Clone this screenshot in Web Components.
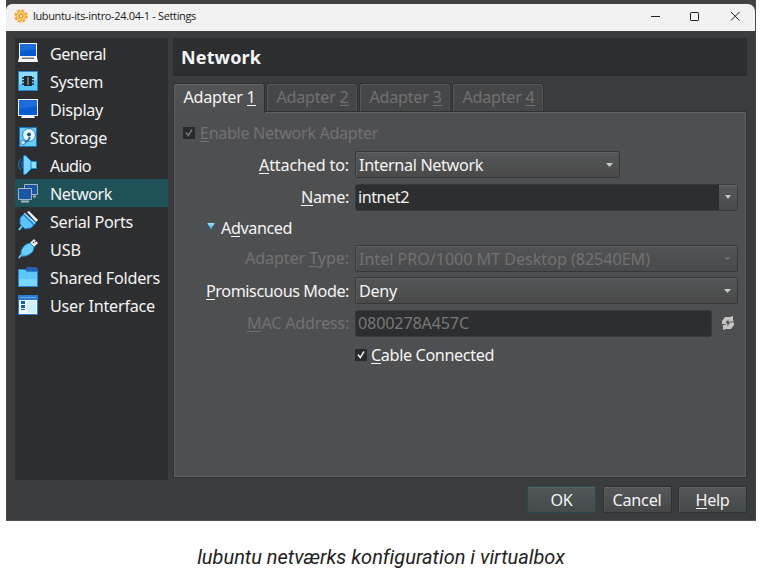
<!DOCTYPE html>
<html lang="da"><head><meta charset="utf-8"><title>Settings</title>
<style>
body{margin:0;background:#fff;width:762px;height:570px;overflow:hidden;font-family:"Noto Sans",sans-serif;font-size:16.2px;color:#f4f4f4}
</style></head><body>
<settings-page></settings-page>
<script>
const define=(name,css,html,init)=>customElements.define(name,class extends HTMLElement{
  constructor(){super();this.attachShadow({mode:'open'}).innerHTML='<style>*{box-sizing:border-box}'+css+'</style>'+html;}
  connectedCallback(){if(init)init(this,this.shadowRoot);}
});
/* Text run spaced to an exact width; "_" before a letter marks its mnemonic. */
define('fit-text',':host{display:inline-block;white-space:pre;line-height:20px;flex:none}u{text-decoration:none;background:linear-gradient(currentColor,currentColor) 0 19px/100% 1px no-repeat}','<span></span>',(h,r)=>{
  const s=r.querySelector('span'),t=h.getAttribute('text')||'',w=+h.getAttribute('w');
  s.innerHTML=t.replace(/_(.)/g,'<u>$1</u>');
  const n=s.textContent.length;
  if(n)s.style.letterSpacing=((w-s.getBoundingClientRect().width)/n)+'px';
});
const icons={
General:'<path d="M1 0h18v14H1z" fill="#f2f2f2"/><path d="M2 1h16v12H2z" fill="#075bd0"/><path d="M2 1h16v5L2 8z" fill="#1c6cdb"/><path d="M1 14h18l1 5H0z" fill="#f6f6f6"/><path d="M4 14.500h12v1.500H4z" fill="#777"/>',
System:'<path d="M.500.500h19v19H.500z" fill="#5cc4f6" stroke="#2a86ca"/><path d="M1 1h18v8L1 13z" fill="#8bdcff"/><path d="M6 5h8v10H6z" fill="#20282e"/><path d="M4 7h2m-2 3h2m-2 3h2m8-6h2m-2 3h2m-2 3h2" stroke="#20282e" stroke-width="1.600"/><path d="M9 6h2v8H9z" fill="#66737a"/>',
Display:'<path d="M0 0h20v17H0z" fill="#f2f2f2"/><path d="M1 1h18v15H1z" fill="#075bd0"/><path d="M1 1h18v6L1 10z" fill="#1c6cdb"/><path d="M4 17h12l1 2H3z" fill="#f6f6f6"/>',
Storage:'<path d="M1.500.500h17v19h-17z" fill="#6bcdfa" stroke="#1b75ba"/><circle cx="11" cy="8" r="6.400" fill="#e9faff" stroke="#2383c9"/><circle cx="11" cy="7.500" r="1.900" fill="#174e86"/><path d="M5 16q5-1 7-6" fill="none" stroke="#2a6fae" stroke-width="2"/><circle cx="5" cy="15.500" r="2.300" fill="#b9ecff" stroke="#2a6fae" stroke-width=".8"/>',
Audio:'<path d="M3 4Q-2 10 3 15M5 6Q2 10 5 13" fill="none" stroke="#27689b" stroke-width="1.300"/><path d="M5.500 1l2-.5 6 6v7l-6 6-2-.5z" fill="#78d6ff" stroke="#198be0"/><path d="M13 6.500h5.500v7H13z" fill="#8be2ff" stroke="#168bd8"/>',
Network:'<path d="M6.500 1.500h13v10h-13z" fill="#1856a4" stroke="#a3b2be"/><path d="M15 13.500h3" stroke="#a3b2be" stroke-width="2"/><path d="M.500 5.500h13v11H.500z" fill="#1957a4" stroke="#a8b4bf"/><path d="M3 18.500h8" stroke="#a8b4bf" stroke-width="2"/>',
'Serial Ports':'<path d="M9 1l2-1 9 9-2 2z" fill="#f4f4f4"/><path d="M2 7l5-5 11 10-5 5-6 1-5-5z" fill="#5cc4fb" stroke="#1676c8"/><path d="M5 3l11 11" stroke="#1d7cc9" stroke-width="1.300"/><path d="M6 2l11 10" stroke="#bdeaff"/><path d="M4 15l-3 4" stroke="#65cfff" stroke-width="2"/>',
USB:'<path d="M12 4l4-4 4 4-4 4z" fill="#f2f2f2"/><path d="M15 3l1 1m1-2l1 1" stroke="#444" stroke-width="1.300"/><path d="M6 7q2-2 6-3l4 4q0 5-4 7-4 3-9 2-1-6 3-10z" fill="#6bcfff" stroke="#2382c8"/><path d="M3 16l-2 3" stroke="#73d5ff" stroke-width="1.600"/>',
'Shared Folders':'<path d="M7 3l2-3h9l2 2v5H7z" fill="#2461b5"/><path d="M0 2h7l2 2h11v16H0z" fill="#2e83d3"/><path d="M1 3h6l2 2h10v14H1z" fill="#5cc8fb"/><path d="M1 12h18v7H1z" fill="#79d8ff"/>',
'User Interface':'<path d="M0 0h20v20H0z" fill="#2c7bd2"/><path d="M1 5h18v14H1z" fill="#f3fbff"/><path d="M9 6h9v12H9z" fill="#cdf0fc"/><path d="M3 6h4v3H3zm0 4h4v3H3zm0 4h4v1H3z" fill="#165caf"/><path d="M2 2.500h16" stroke="#5da9ec"/>'};
define('nav-item',':host{display:flex;height:28px;align-items:center;padding-left:3px;gap:12px}:host([selected]){background:#1e5158}svg{width:20px;height:20px;flex:none}fit-text{padding-top:2px}','<svg viewBox="0 0 20 20"></svg>',(h,r)=>{
 const f=document.createElement('fit-text');f.setAttribute('text',h.getAttribute('text'));f.setAttribute('w',h.getAttribute('w'));r.append(f);
 r.querySelector('svg').innerHTML=icons[h.getAttribute('text')];
});
define('title-bar',':host{display:flex;height:27px;background:#f2f2f2;border-radius:6px 7px 0 0;align-items:center;padding:0 12px 2px 8px;color:#1b1b1b;font:11px "Open Sans",sans-serif}fit-text{margin-left:5px;margin-right:auto}.g{width:14px;height:14px}.c{width:94px;height:16px}','<svg class="g" viewBox="0 0 16 16"><circle cx="8" cy="8" r="5.500" fill="#ffc65a" stroke="#f2a63a"/><circle cx="8" cy="8" r="6.700" fill="none" stroke="#f0a336" stroke-width="2" stroke-dasharray="3.200 2.060"/><circle cx="8" cy="8" r="2.100" fill="#f6f1e9" stroke="#d87915"/></svg><fit-text text="lubuntu-its-intro-24.04-1 - Settings" w="163"></fit-text><svg class="c" viewBox="0 0 94 16" fill="none" stroke="#222"><path d="M2 8.500h9"/><rect x="41.500" y="4.500" width="8" height="8" rx=".7"/><path d="M82 4l8.500 8.500m0-8.500L82 12.500"/></svg>');
define('tab-label',':host{display:flex;justify-content:center;align-items:center;width:92px;height:28px;padding:0 0 1px 1px;background:#454648;border:1px solid #323335;border-bottom:0;box-shadow:inset 1px 1px #57585a,inset -1px 0 #505153;border-radius:3px 3px 0 0;color:#717173}:host([active]){height:30px;padding-bottom:3px;color:#f4f4f4;background:linear-gradient(#535456,#4e4f51);border-color:#303133;z-index:1;margin-bottom:-2px;box-shadow:inset 1px 1px #626365}','<slot></slot>');
define('check-box',':host{display:block;width:12px;height:12px;background:#292a2c;color:#eee;flex:none}svg{display:block}','<svg width="12" height="12" viewBox="0 0 12 12" fill="none" stroke="currentColor" stroke-width="1.500"><path d="M3 5.500l2.300 3.200L9 2.500"/></svg>');
define('drop-down',':host{display:flex;align-items:center;height:27px;padding:1px 6px 0 3px;border:1px solid #363739;border-radius:2px;background:linear-gradient(#555658,#484948);box-shadow:inset 0 1px #616264,inset 1px 0 #5b5c5e}:host([disabled]){color:#717173;background:linear-gradient(#525355,#494a4b)}i{margin-left:auto;width:7px;height:4px;background:#c9c9ca;clip-path:polygon(0 0,100% 0,50% 100%)}:host([disabled]) i{background:#6b6c6e}','<slot></slot><i></i>');
define('text-field',':host{display:flex;align-items:center;height:27px;padding-left:2px;background:#2d2e30;border:1px solid #393a3c;border-radius:3px}b{margin-left:auto;width:18px;height:25px;display:grid;place-items:center;background:linear-gradient(#57585a,#494a4b);box-shadow:inset 0 1px #69696c}i{width:6px;height:4px;background:#c9c9ca;clip-path:polygon(0 0,100% 0,50% 100%)}:host(:not([menu])) b{display:none}:host([disabled]){color:#777779}','<slot></slot><b><i></i></b>');
define('push-button',':host{display:flex;width:69px;height:27px;align-items:center;justify-content:center;background:linear-gradient(#565759,#464748);border:1px solid #2f3032;border-radius:2px;box-shadow:inset 0 1px #626365,inset 1px 0 #58595b}:host([primary]){border-color:#254b50;background:linear-gradient(#505759,#434b4b);box-shadow:inset 0 1px #5a6365}','<slot></slot>');
define('network-panel',`:host{display:block;height:367px;border:1px solid #303133;background:#4e4f51;box-shadow:inset 1px 1px #606163,inset -1px -1px #606163;padding:10px 8px 0 9px}
.enable{display:flex;gap:5px;align-items:center;height:22px;color:#717173}.enable check-box{color:#777779}
.form{display:grid;grid-template-columns:166px 383px;column-gap:6px;grid-template-rows:27px 27px 23px 27px 27px 27px 25px;row-gap:5.500px;margin-top:7px;align-items:center}.l{text-align:right;line-height:20px;height:20px}.short{width:265px}.dim{color:#717173}.adv{grid-column:1/3;display:flex;align-items:center;gap:6px;padding-left:24px}.tri{width:8px;height:7px;background:linear-gradient(#9ee5ff,#1b9ee7);clip-path:polygon(0 0,100% 0,50% 100%);margin-top:-3px}.mac{display:flex;align-items:center;gap:9px}.mac text-field{width:357px}.cable{display:flex;gap:4px;align-items:center;height:20px}`,
`<div class="enable"><check-box></check-box><fit-text text="_Enable Network Adapter" w="178"></fit-text></div><div class="form">
<div class="l"><fit-text text="_Attached to:" w="90"></fit-text></div><drop-down class="short"><fit-text text="Internal Network" w="124"></fit-text></drop-down>
<div class="l"><fit-text text="_Name:" w="48"></fit-text></div><text-field menu><fit-text text="intnet2" w="51"></fit-text></text-field>
<div class="adv"><span class="tri"></span><fit-text text="A_dvanced" w="71"></fit-text></div>
<div class="l dim"><fit-text text="Adapter _Type:" w="104"></fit-text></div><drop-down disabled><fit-text text="Intel PRO/1000 MT Desktop (82540EM)" w="291"></fit-text></drop-down>
<div class="l"><fit-text text="_Promiscuous Mode:" w="143"></fit-text></div><drop-down><fit-text text="Deny" w="38"></fit-text></drop-down>
<div class="l dim"><fit-text text="_MAC Address:" w="102"></fit-text></div><div class="mac"><text-field disabled><fit-text text="0800278A457C" w="111"></fit-text></text-field><svg width="14" height="14" viewBox="0 0 14 14"><path d="M4 1h5l3-1v4l1 2v3l-3 4H5l-3 1v-4L1 8V5z" fill="#c4c4c5"/><path d="M4.500 6.500l3-3v2.500l2-.5-3 5V8z" fill="#515254"/><path d="M9.500 6H13M1 8.500h3.500" stroke="#515254"/></svg></div>
<span></span><div class="cable"><check-box></check-box><fit-text text="_Cable Connected" w="123"></fit-text></div></div>`);
define('settings-window',`:host{display:block;width:750px;height:521px;background:#3b3c3e;border-bottom:1px solid #505153;border-right:1px solid #494a4c;border-left:1px solid #47494b}.top{height:3.500px;background:#414244;overflow:hidden}title-bar{margin:0 0 0 -1px}.body{display:grid;grid-template-columns:153px 574px;column-gap:5px;padding:7.500px 0 0 8px}.nav{height:442px;background:#2d2e30;padding-top:1px}.main{display:flex;flex-direction:column}.head{height:38px;background:#2d2e30;display:flex;align-items:center;padding-left:8px;font-weight:bold}.tabs{display:flex;align-items:flex-end;gap:1px;margin-top:6px;height:30px;position:relative;z-index:1;padding-bottom:1px}network-panel{margin-top:-1px}.foot{display:flex;justify-content:flex-end;gap:6.500px;padding:6px 8px 0}`,
`<div class="top"></div><title-bar></title-bar><div class="body"><div class="nav">
<nav-item text="General" w="56"></nav-item><nav-item text="System" w="53"></nav-item><nav-item text="Display" w="53"></nav-item><nav-item text="Storage" w="57"></nav-item><nav-item text="Audio" w="41"></nav-item><nav-item text="Network" w="62" selected></nav-item><nav-item text="Serial Ports" w="83"></nav-item><nav-item text="USB" w="31"></nav-item><nav-item text="Shared Folders" w="110"></nav-item><nav-item text="User Interface" w="105"></nav-item>
</div><div class="main"><div class="head"><fit-text text="Network" w="80" style="font-size:18px"></fit-text></div>
<div class="tabs"><tab-label active><fit-text text="Adapter _1" w="72"></fit-text></tab-label><tab-label><fit-text text="Adapter _2" w="72"></fit-text></tab-label><tab-label><fit-text text="Adapter _3" w="72"></fit-text></tab-label><tab-label><fit-text text="Adapter _4" w="72"></fit-text></tab-label></div>
<network-panel></network-panel></div></div>
<div class="foot"><push-button primary><fit-text text="OK" w="22"></fit-text></push-button><push-button><fit-text text="Cancel" w="49"></fit-text></push-button><push-button><fit-text text="_Help" w="34"></fit-text></push-button></div>`);
define('settings-page',':host{display:flex;flex-direction:column;align-items:center}settings-window{align-self:flex-start;margin-left:6px}.cap{margin-top:24px;font:italic 20px Roboto,sans-serif;color:#222}','<settings-window></settings-window><div class="cap"><fit-text text="lubuntu netværks konfiguration i virtualbox" w="367"></fit-text></div>');
</script></body></html>
